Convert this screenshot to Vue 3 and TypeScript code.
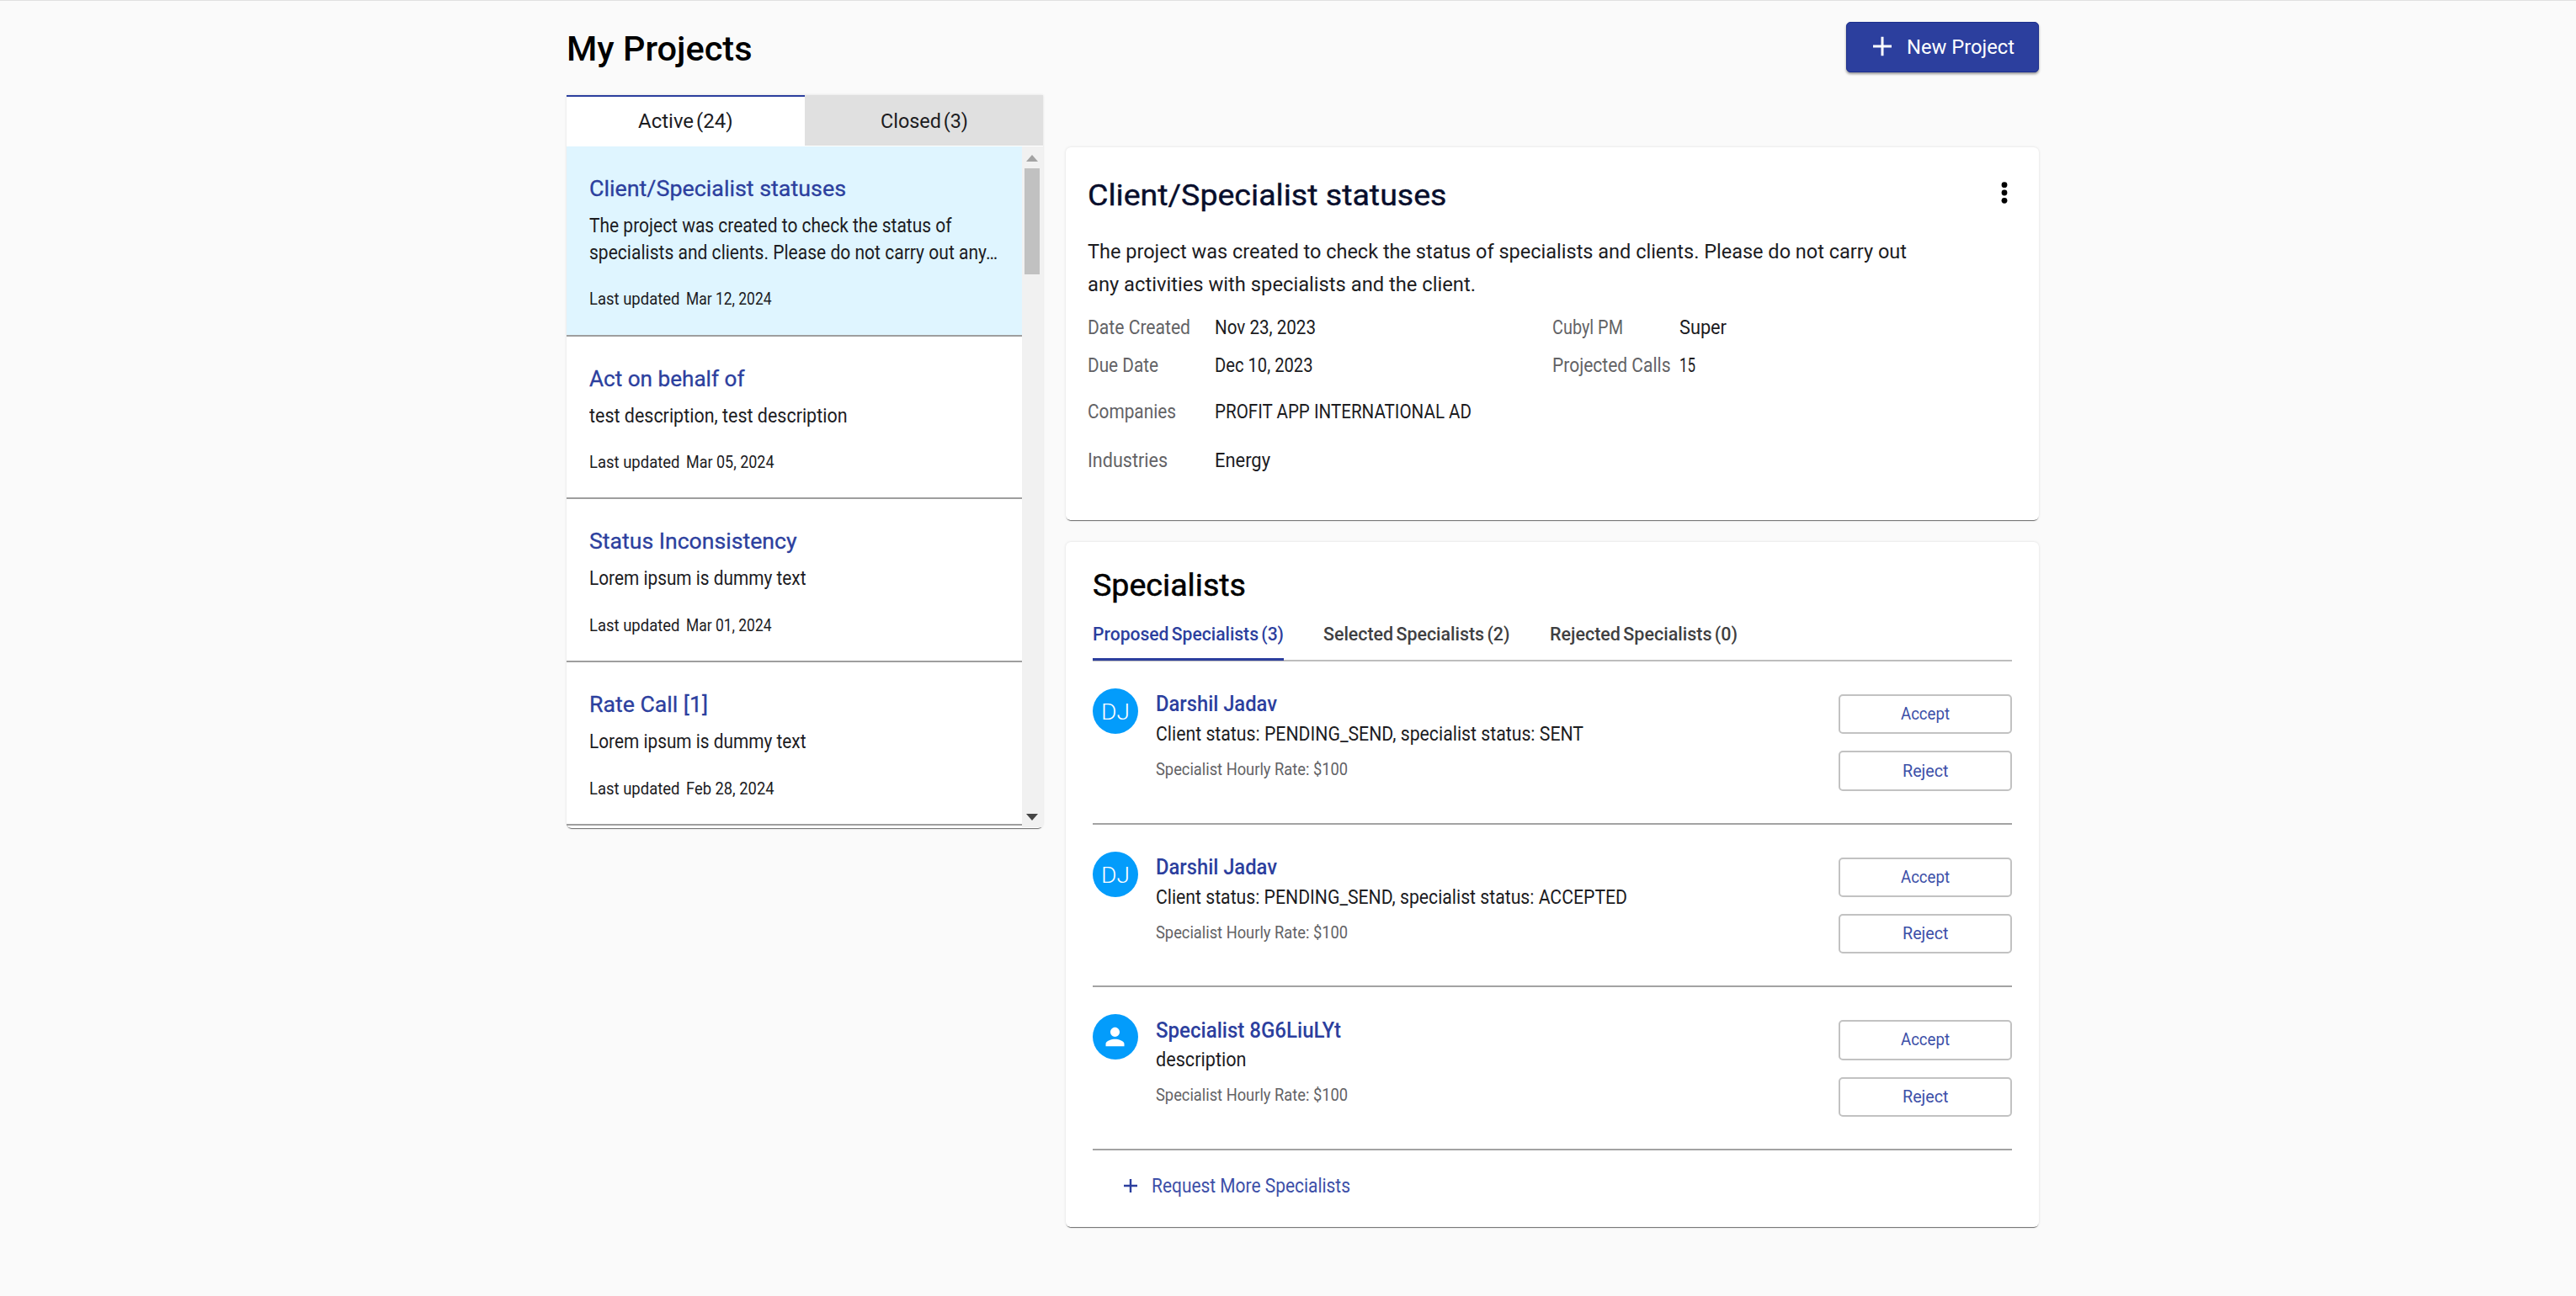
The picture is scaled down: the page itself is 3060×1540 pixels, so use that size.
<script setup lang="ts">
import type { Directive } from 'vue'

interface TextLine {
  text: string
  width: number
}

interface Project {
  title: TextLine
  lines: TextLine[]
  date: TextLine
}

interface Fact {
  label: TextLine
  value: TextLine
}

interface Specialist {
  initials: string
  name: TextLine
  status: TextLine
}

// Condenses a line of text to the given advance width, in pixels.
const vFit: Directive<HTMLElement, number> = {
  mounted(el, binding) {
    const natural = el.getBoundingClientRect().width
    el.style.transform = `scaleX(${binding.value / natural})`
    el.style.marginRight = `${binding.value - natural}px`
  },
}

const projects: Project[] = [
  {
    title: { text: 'Client/Specialist statuses', width: 305 },
    lines: [
      { text: 'The project was created to check the status of', width: 430.5 },
      { text: 'specialists and clients. Please do not carry out any…', width: 485 },
    ],
    date: { text: 'Mar 12, 2024', width: 101.5 },
  },
  {
    title: { text: 'Act on behalf of', width: 184.5 },
    lines: [{ text: 'test description, test description', width: 306.5 }],
    date: { text: 'Mar 05, 2024', width: 104.5 },
  },
  {
    title: { text: 'Status Inconsistency', width: 246.5 },
    lines: [{ text: 'Lorem ipsum is dummy text', width: 257.5 }],
    date: { text: 'Mar 01, 2024', width: 101.5 },
  },
  {
    title: { text: 'Rate Call [1]', width: 141 },
    lines: [{ text: 'Lorem ipsum is dummy text', width: 257.5 }],
    date: { text: 'Feb 28, 2024', width: 104.5 },
  },
]

const summary: TextLine[] = [
  {
    text: 'The project was created to check the status of specialists and clients. Please do not carry out',
    width: 973,
  },
  { text: 'any activities with specialists and the client.', width: 461 },
]

const factRows: Fact[][] = [
  [
    { label: { text: 'Date Created', width: 122 }, value: { text: 'Nov 23, 2023', width: 120 } },
    { label: { text: 'Cubyl PM', width: 84 }, value: { text: 'Super', width: 56 } },
  ],
  [
    { label: { text: 'Due Date', width: 84 }, value: { text: 'Dec 10, 2023', width: 116.5 } },
    { label: { text: 'Projected Calls', width: 140.5 }, value: { text: '15', width: 19 } },
  ],
  [
    {
      label: { text: 'Companies', width: 105 },
      value: { text: 'PROFIT APP INTERNATIONAL AD', width: 305 },
    },
  ],
  [{ label: { text: 'Industries', width: 95 }, value: { text: 'Energy', width: 66 } }],
]

const specialistTabs: TextLine[] = [
  { text: 'Proposed Specialists (3)', width: 227 },
  { text: 'Selected Specialists (2)', width: 221.5 },
  { text: 'Rejected Specialists (0)', width: 223 },
]

const specialists: Specialist[] = [
  {
    initials: 'DJ',
    name: { text: 'Darshil Jadav', width: 144 },
    status: { text: 'Client status: PENDING_SEND, specialist status: SENT', width: 508 },
  },
  {
    initials: 'DJ',
    name: { text: 'Darshil Jadav', width: 144 },
    status: { text: 'Client status: PENDING_SEND, specialist status: ACCEPTED', width: 560 },
  },
  {
    initials: '',
    name: { text: 'Specialist 8G6LiuLYt', width: 220 },
    status: { text: 'description', width: 107.5 },
  },
]
</script>

<template>
  <div class="page">
    <main class="content">
      <header class="header">
        <h1 class="page-title"><span v-fit="220.5" class="fit">My Projects</span></h1>
        <button class="new-project">
          <svg class="plus" width="22" height="24" viewBox="0 0 22 24">
            <path d="M11 .8v22.4M0 12h22" stroke="#fff" stroke-width="3" fill="none" />
          </svg>
          <span v-fit="128" class="fit">New Project</span>
        </button>
      </header>

      <div class="columns">
        <section class="sidebar">
          <div class="tabs">
            <div class="tab tab-active"><span v-fit="112.5" class="fit">Active (24)</span></div>
            <div class="tab"><span v-fit="104" class="fit">Closed (3)</span></div>
          </div>
          <div class="list">
            <div class="items">
              <article
                v-for="(project, i) in projects"
                :key="i"
                class="item"
                :class="{ 'item-selected': i === 0 }"
              >
                <h2 class="item-title">
                  <span v-fit="project.title.width" class="fit">{{ project.title.text }}</span>
                </h2>
                <p v-for="line in project.lines" :key="line.text" class="text-line">
                  <span v-fit="line.width" class="fit">{{ line.text }}</span>
                </p>
                <div class="updated">
                  <span v-fit="107.5" class="fit">Last updated</span>
                  <span v-fit="project.date.width" class="fit">{{ project.date.text }}</span>
                </div>
              </article>
            </div>
            <div class="scrollbar">
              <svg width="14" height="8" viewBox="0 0 14 8"><path d="M0 8L7 0l7 8z" fill="#a3a3a3" /></svg>
              <div class="thumb"></div>
              <svg class="arrow-down" width="14" height="8" viewBox="0 0 14 8">
                <path d="M0 0h14L7 8z" fill="#454545" />
              </svg>
            </div>
          </div>
        </section>

        <div class="main-column">
          <section class="card detail">
            <div class="detail-head">
              <h2 class="detail-title"><span v-fit="426.5" class="fit">Client/Specialist statuses</span></h2>
              <svg class="kebab" width="8" height="28" viewBox="0 0 8 28" fill="#000">
                <circle cx="4" cy="4.7" r="3.4" />
                <circle cx="4" cy="14" r="3.4" />
                <circle cx="4" cy="23.3" r="3.4" />
              </svg>
            </div>
            <div class="summary">
              <p v-for="line in summary" :key="line.text" class="summary-line">
                <span v-fit="line.width" class="fit">{{ line.text }}</span>
              </p>
            </div>
            <div v-for="(row, i) in factRows" :key="i" class="facts" :class="'facts-' + i">
              <template v-for="fact in row" :key="fact.label.text">
                <div class="fact-label">
                  <span v-fit="fact.label.width" class="fit">{{ fact.label.text }}</span>
                </div>
                <div class="fact-value">
                  <span v-fit="fact.value.width" class="fit">{{ fact.value.text }}</span>
                </div>
              </template>
            </div>
          </section>

          <section class="card specialists">
            <h2 class="specialists-title"><span v-fit="182" class="fit">Specialists</span></h2>
            <nav class="sub-tabs">
              <div
                v-for="(tab, i) in specialistTabs"
                :key="tab.text"
                class="sub-tab"
                :class="{ 'sub-tab-active': i === 0 }"
              >
                <span v-fit="tab.width" class="fit">{{ tab.text }}</span>
              </div>
            </nav>
            <article v-for="(person, i) in specialists" :key="i" class="row">
              <div class="avatar">
                <span v-if="person.initials" v-fit="34" class="fit">{{ person.initials }}</span>
                <svg v-else width="33" height="34" viewBox="0 0 24 24" fill="#fff" preserveAspectRatio="none">
                  <path
                    d="M12 12c2.21 0 4-1.79 4-4s-1.79-4-4-4-4 1.79-4 4 1.79 4 4 4zm0 2c-2.67 0-8 1.34-8 4v2h16v-2c0-2.66-5.33-4-8-4z"
                  />
                </svg>
              </div>
              <div class="person">
                <div class="person-name">
                  <span v-fit="person.name.width" class="fit">{{ person.name.text }}</span>
                </div>
                <div class="text-line">
                  <span v-fit="person.status.width" class="fit">{{ person.status.text }}</span>
                </div>
                <div class="rate"><span v-fit="228" class="fit">Specialist Hourly Rate: $100</span></div>
              </div>
              <div class="actions">
                <button class="action"><span v-fit="58" class="fit">Accept</span></button>
                <button class="action"><span v-fit="54.5" class="fit">Reject</span></button>
              </div>
            </article>
            <div class="request">
              <svg width="16" height="16" viewBox="0 0 16 16">
                <path d="M8 0v16M0 8h16" stroke="#2c3f9e" stroke-width="2.4" fill="none" />
              </svg>
              <span v-fit="236" class="fit">Request More Specialists</span>
            </div>
          </section>
        </div>
      </div>
    </main>
  </div>
</template>

<style>
body {
  margin: 0;
  background: #fafafa;
}
</style>

<style scoped>
.page {
  box-sizing: border-box;
  width: 3060px;
  height: 1540px;
  overflow: hidden;
  border-top: 1px solid #e0e0e0;
  background: #fafafa;
  color: #1c1c1f;
  font-family: Roboto, 'Liberation Sans', sans-serif;
  font-size: 23.6px;
  line-height: 32px;
}
h1,
h2,
p {
  margin: 0;
}
button {
  box-sizing: border-box;
  margin: 0;
  padding: 0;
  font-family: inherit;
}
svg {
  display: block;
  flex: none;
}
.fit {
  display: inline-block;
  white-space: nowrap;
  transform-origin: 0 50%;
}
.content {
  width: 1749px;
  padding-top: 25px;
  margin-left: 673px;
}
.header {
  display: flex;
  justify-content: space-between;
  height: 87px;
}
.page-title {
  padding-top: 2px;
  color: #000;
  font-size: 41.5px;
  font-weight: 500;
  line-height: 60px;
}
.new-project {
  display: flex;
  align-items: center;
  width: 229px;
  height: 60px;
  padding-left: 30px;
  border: 1px solid #1c2f8d;
  border-radius: 5px;
  background: #2c3f9e;
  box-shadow: 0 2px 3px rgba(0, 0, 0, 0.4);
  color: #fff;
  font-size: 23.6px;
  line-height: 32px;
}
.plus {
  margin: 0 18px 2px 1px;
}
.columns {
  display: flex;
  justify-content: space-between;
  align-items: flex-start;
}
.sidebar {
  width: 566px;
  border-radius: 0 0 6px 6px;
  background: #fff;
  box-shadow: 0 2px 1px -1px rgba(0, 0, 0, 0.55), 0 0 3px rgba(0, 0, 0, 0.13);
}
.tabs {
  display: flex;
  height: 60px;
  padding-bottom: 0.5px;
}
.tab {
  flex: 1;
  background: #e0e0e0;
  line-height: 62px;
  text-align: center;
  word-spacing: -3px;
}
.tab-active {
  background: #fff;
  box-shadow: inset 0 2px #2c3f9e;
}
.list {
  display: flex;
  height: 810.5px;
}
.items {
  width: 541px;
}
.item {
  box-sizing: border-box;
  height: 193.7px;
  padding: 32.2px 0 0 26.5px;
  border-bottom: 2px solid #9e9e9e;
}
.item-selected {
  height: 226px;
  background: #dff5ff;
}
.item-title {
  margin-bottom: 10px;
  color: #2c3f9e;
  font-size: 25.6px;
  font-weight: 400;
  -webkit-text-stroke: 0.3px #2c3f9e;
  line-height: 36px;
}
.text-line {
  height: 32px;
}
.updated {
  display: flex;
  gap: 7.5px;
  margin-top: 26.5px;
  font-size: 19.7px;
  line-height: 28px;
}
.scrollbar {
  box-sizing: border-box;
  display: flex;
  flex-direction: column;
  align-items: center;
  width: 25px;
  height: 809px;
  padding: 10px 1px 8px 0;
  background: #f1f1f1;
}
.thumb {
  width: 18px;
  height: 126px;
  margin-top: 8px;
  background: #c1c1c1;
}
.arrow-down {
  margin-top: auto;
}
.main-column {
  display: flex;
  flex-direction: column;
  gap: 26.5px;
  width: 1156px;
  padding-top: 62px;
}
.card {
  box-sizing: border-box;
  border-radius: 6px;
  background: #fff;
  box-shadow: 0 2px 1px -1px rgba(0, 0, 0, 0.55), 0 0 3px rgba(0, 0, 0, 0.13);
}
.detail {
  height: 442.5px;
  padding: 31.5px 37px 0 26px;
}
.detail-head {
  display: flex;
  justify-content: space-between;
}
.detail-title {
  color: #080e2c;
  font-size: 35.4px;
  font-weight: 400;
  -webkit-text-stroke: 0.4px #080e2c;
  line-height: 50px;
}
.kebab {
  margin: 8.5px 0 0;
}
.summary {
  margin: 23.1px 0 15.3px;
}
.summary-line {
  height: 39px;
  line-height: 39px;
}
.facts {
  display: grid;
  grid-template-columns: 151px 401px 150.5px 1fr;
  height: 45px;
}
.facts-1 {
  height: 55.6px;
}
.facts-2 {
  height: 57.7px;
}
.fact-label {
  color: #636366;
}
.specialists {
  height: 813.5px;
  padding: 26.8px 32px 0 31.5px;
}
.specialists-title {
  color: #000;
  font-size: 36.5px;
  font-weight: 400;
  -webkit-text-stroke: 0.5px #000;
  line-height: 50px;
}
.sub-tabs {
  display: flex;
  gap: 47.5px;
  height: 47.2px;
  margin-top: 18px;
  box-shadow: inset 0 -2px #bdbdbd;
  color: #3f3f42;
  font-size: 21.9px;
  font-weight: 500;
  line-height: 30px;
  word-spacing: -2px;
}
.sub-tab-active {
  box-sizing: border-box;
  height: 46.5px;
  border-bottom: 3px solid #2c3f9e;
  color: #2c3f9e;
}
.row {
  box-sizing: border-box;
  display: flex;
  height: 193.6px;
  padding-top: 32px;
  border-bottom: 2px solid #a3a3a3;
}
.avatar {
  display: flex;
  align-items: center;
  justify-content: center;
  width: 54px;
  height: 54px;
  border-radius: 50%;
  background: #039cfb;
  color: #fff;
  font-size: 25.6px;
  font-weight: 300;
}
.avatar .fit {
  padding-top: 2px;
}
.person {
  flex: 1;
  margin-left: 21px;
}
.person-name {
  margin-bottom: 1.5px;
  padding-top: 0.5px;
  color: #2c3f9e;
  font-size: 25.6px;
  font-weight: 500;
  line-height: 36px;
}
.rate {
  margin-top: 13px;
  color: #636366;
  font-size: 19.7px;
  line-height: 28px;
}
.actions {
  display: flex;
  flex-direction: column;
  gap: 20px;
  padding-top: 7px;
}
.action {
  width: 206px;
  height: 47.4px;
  padding-top: 1px;
  border: 2px solid #c2c2c2;
  border-radius: 5px;
  background: #fff;
  color: #3d50a8;
  font-size: 19.7px;
  line-height: 28px;
}
.request {
  display: flex;
  align-items: center;
  gap: 17px;
  margin: 26.5px 0 0 37px;
  color: #3d50a8;
}
</style>
